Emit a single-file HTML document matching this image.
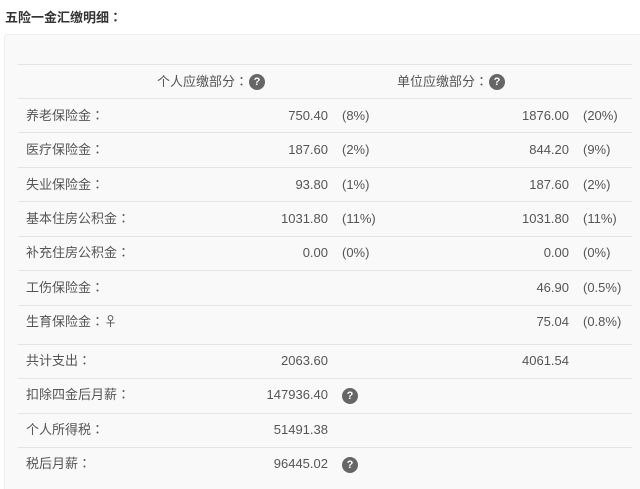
<!DOCTYPE html>
<html><head><meta charset="utf-8"><style>
html,body{margin:0;background:#fff;width:640px;height:489px;overflow:hidden;}
body{font-family:"Liberation Sans","Noto Sans CJK SC",sans-serif;font-size:13px;color:#555;position:relative;}
.c{font-family:"Noto Sans CJK SC",sans-serif;}
.k{font-family:"Noto Sans CJK JP",sans-serif;}
.title{position:absolute;left:5px;top:7px;font-weight:bold;color:#333;font-size:13px;font-family:"Noto Sans CJK SC",sans-serif;}
.panel{position:absolute;left:4px;top:34px;width:640px;height:470px;background:#f9f9f9;border:1px solid #eee;border-radius:3px;}
.line{position:absolute;left:18px;width:614px;height:1px;background:#e3e3e3;}
.t{position:absolute;white-space:nowrap;line-height:16px;}
.r{text-align:right;}
.q{position:absolute;width:16px;height:16px;border-radius:50%;background:#666;color:#fff;font-size:11px;font-weight:bold;text-align:center;line-height:16px;}
</style></head><body>
<div class="title">五险一金汇缴明细<span class="k">：</span></div>
<div class="panel"></div>
<div class="line" style="top:64px"></div>
<div class="line" style="top:98px"></div>
<div class="line" style="top:132px"></div>
<div class="line" style="top:167px"></div>
<div class="line" style="top:201px"></div>
<div class="line" style="top:236px"></div>
<div class="line" style="top:270px"></div>
<div class="line" style="top:305px"></div>
<div class="line" style="top:344px"></div>
<div class="line" style="top:378px"></div>
<div class="line" style="top:413px"></div>
<div class="line" style="top:447px"></div>
<div class="t c" style="left:157px;top:73px">个人应缴部分<span class="k">：</span></div><div class="q" style="left:249px;top:74px">?</div>
<div class="t c" style="left:397px;top:73px">单位应缴部分<span class="k">：</span></div><div class="q" style="left:489px;top:74px">?</div>

<div class="t c" style="left:26px;top:107px">养老保险金<span class="k">：</span></div>
<div class="t r" style="right:312px;top:108px">750.40</div><div class="t" style="left:342px;top:108px">(8%)</div>
<div class="t r" style="right:71px;top:108px">1876.00</div><div class="t" style="left:583px;top:108px">(20%)</div>

<div class="t c" style="left:26px;top:141px">医疗保险金<span class="k">：</span></div>
<div class="t r" style="right:312px;top:142px">187.60</div><div class="t" style="left:342px;top:142px">(2%)</div>
<div class="t r" style="right:71px;top:142px">844.20</div><div class="t" style="left:583px;top:142px">(9%)</div>

<div class="t c" style="left:26px;top:176px">失业保险金<span class="k">：</span></div>
<div class="t r" style="right:312px;top:177px">93.80</div><div class="t" style="left:342px;top:177px">(1%)</div>
<div class="t r" style="right:71px;top:177px">187.60</div><div class="t" style="left:583px;top:177px">(2%)</div>

<div class="t c" style="left:26px;top:210px">基本住房公积金<span class="k">：</span></div>
<div class="t r" style="right:312px;top:211px">1031.80</div><div class="t" style="left:342px;top:211px">(11%)</div>
<div class="t r" style="right:71px;top:211px">1031.80</div><div class="t" style="left:583px;top:211px">(11%)</div>

<div class="t c" style="left:26px;top:244px">补充住房公积金<span class="k">：</span></div>
<div class="t r" style="right:312px;top:245px">0.00</div><div class="t" style="left:342px;top:245px">(0%)</div>
<div class="t r" style="right:71px;top:245px">0.00</div><div class="t" style="left:583px;top:245px">(0%)</div>

<div class="t c" style="left:26px;top:279px">工伤保险金<span class="k">：</span></div>
<div class="t r" style="right:71px;top:280px">46.90</div><div class="t" style="left:583px;top:280px">(0.5%)</div>

<div class="t c" style="left:26px;top:313px">生育保险金<span class="k">：</span>♀</div>
<div class="t r" style="right:71px;top:314px">75.04</div><div class="t" style="left:583px;top:314px">(0.8%)</div>

<div class="t c" style="left:26px;top:352px">共计支出<span class="k">：</span></div>
<div class="t r" style="right:312px;top:353px">2063.60</div>
<div class="t r" style="right:71px;top:353px">4061.54</div>

<div class="t c" style="left:26px;top:386px">扣除四金后月薪<span class="k">：</span></div>
<div class="t r" style="right:312px;top:387px">147936.40</div><div class="q" style="left:342px;top:388px">?</div>

<div class="t c" style="left:26px;top:421px">个人所得税<span class="k">：</span></div>
<div class="t r" style="right:312px;top:422px">51491.38</div>

<div class="t c" style="left:26px;top:455px">税后月薪<span class="k">：</span></div>
<div class="t r" style="right:312px;top:456px">96445.02</div><div class="q" style="left:342px;top:457px">?</div>
</body></html>
